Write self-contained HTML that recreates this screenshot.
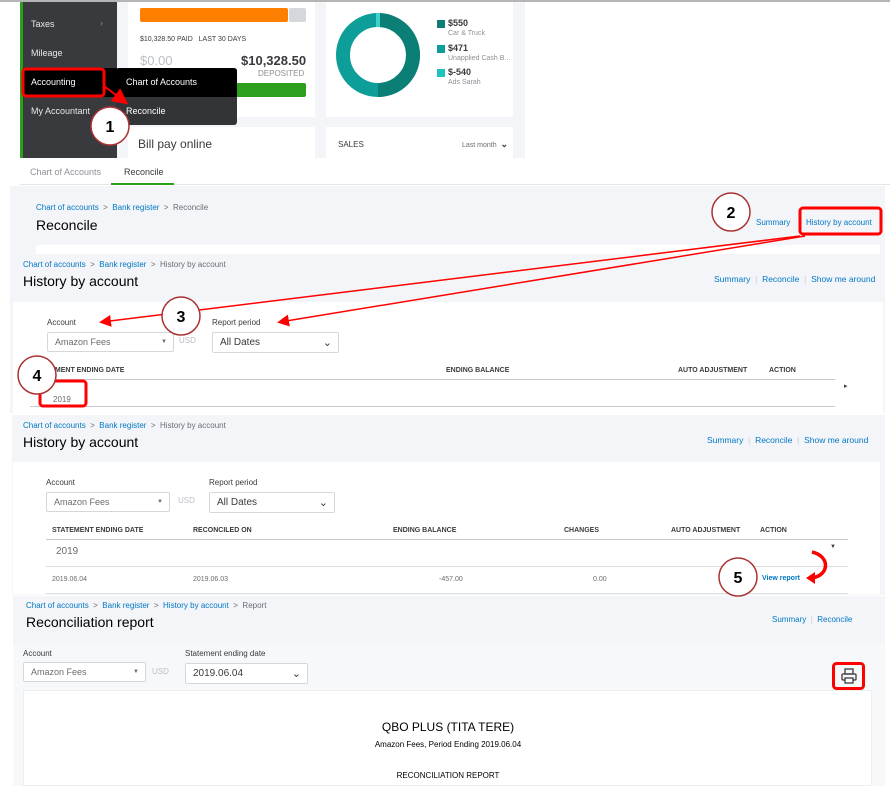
<!DOCTYPE html>
<html><head><meta charset="utf-8"><style>
*{margin:0;padding:0;box-sizing:border-box}
body{width:890px;height:796px;background:#fff;position:relative;overflow:hidden;font-family:"Liberation Sans",sans-serif;color:#393a3d}
.a{position:absolute;white-space:nowrap}
.bl{color:#0077c5}
.g{color:#6b6c72}
.sel{position:absolute;border:1px solid #d4d7dc;background:#fff;border-radius:2px;font-size:9px;color:#6b6c72;padding-left:7px;display:flex;align-items:center}
.hd{font-size:7px;font-weight:bold;color:#393a3d;position:absolute}
</style></head><body>
<div class="a" style="left:0;top:0;width:890px;height:2px;background:#b5b5b5"></div>
<div class="a" style="left:117px;top:2px;width:408px;height:156px;background:#f4f5f8"></div>
<div class="a" style="left:20px;top:2px;width:97px;height:156px;background:#393a3d;border-left:3px solid #2ca01c"></div>
<div class="a" style="left:31px;top:19px;font-size:9px;color:#e8e8e8">Taxes</div>
<div class="a" style="left:100px;top:18px;font-size:9px;color:#888">›</div>
<div class="a" style="left:31px;top:48px;font-size:9px;color:#e8e8e8">Mileage</div>
<div class="a" style="left:23px;top:68px;width:94px;height:29px;background:#000"></div>
<div class="a" style="left:31px;top:77px;font-size:9px;color:#fff">Accounting</div>
<div class="a" style="left:31px;top:106px;font-size:9px;color:#e8e8e8">My Accountant</div>
<div class="a" style="left:128px;top:2px;width:187px;height:115px;background:#fff"></div>
<div class="a" style="left:140px;top:8px;width:148px;height:14px;background:#ff8000;border-radius:2px"></div>
<div class="a" style="left:289px;top:8px;width:17px;height:14px;background:#d4d7dc;border-radius:2px"></div>
<div class="a" style="left:140px;top:36px;font-size:7px">$10,328.50 PAID &nbsp;&nbsp;LAST 30 DAYS</div>
<div class="a" style="left:140px;top:53px;font-size:13px;color:#babec5">$0.00</div>
<div class="a" style="left:241px;top:53px;font-size:13px;color:#393a3d;font-weight:bold">$10,328.50</div>
<div class="a" style="left:258px;top:69px;font-size:8px;color:#8d9096">DEPOSITED</div>
<div class="a" style="left:140px;top:83px;width:166px;height:14px;background:#2ca01c;border-radius:2px"></div>
<div class="a" style="left:326px;top:2px;width:187px;height:115px;background:#fff"></div>
<svg class="a" style="left:336px;top:13px" width="84" height="84"><circle cx="42" cy="42" r="35" fill="none" stroke="#0e9e9a" stroke-width="14"/><path d="M42 7 A35 35 0 0 1 42 77" fill="none" stroke="#0b7e76" stroke-width="14"/><path d="M40 7 L44 7" stroke="#3fd1cc" stroke-width="14"/></svg>
<div class="a" style="left:437px;top:20px;width:8px;height:8px;background:#0b7e76"></div>
<div class="a" style="left:448px;top:18px;font-size:9px;font-weight:bold">$550</div>
<div class="a" style="left:448px;top:30px;font-size:7px;color:#8d9096">Car &amp; Truck</div>
<div class="a" style="left:437px;top:45px;width:8px;height:8px;background:#0e9e9a"></div>
<div class="a" style="left:448px;top:43px;font-size:9px;font-weight:bold">$471</div>
<div class="a" style="left:448px;top:55px;font-size:7px;color:#8d9096">Unapplied Cash B...</div>
<div class="a" style="left:437px;top:69px;width:8px;height:8px;background:#1fc4bf"></div>
<div class="a" style="left:448px;top:67px;font-size:9px;font-weight:bold">$-540</div>
<div class="a" style="left:448px;top:79px;font-size:7px;color:#8d9096">Ads Sarah</div>
<div class="a" style="left:128px;top:127px;width:187px;height:31px;background:#fff"></div>
<div class="a" style="left:138px;top:137px;font-size:12px">Bill pay online</div>
<div class="a" style="left:326px;top:127px;width:187px;height:31px;background:#fff"></div>
<div class="a" style="left:338px;top:140px;font-size:8px">SALES</div>
<div class="a" style="left:462px;top:139px;font-size:7px;color:#6b6c72">Last month &nbsp;<b style="font-size:9px;color:#393a3d">⌄</b></div>
<div class="a" style="left:116px;top:68px;width:121px;height:57px;background:#333438;border-radius:3px;overflow:hidden"><div style="height:29px;background:#000"></div></div>
<div class="a" style="left:126px;top:77px;font-size:9px;color:#fff">Chart of Accounts</div>
<div class="a" style="left:126px;top:106px;font-size:9px;color:#fff">Reconcile</div>
<div class="a" style="left:20px;top:158px;width:870px;height:27px;background:#fff;border-bottom:1px solid #e3e5e8"></div>
<div class="a g" style="left:30px;top:167px;font-size:9px;color:#8d9096">Chart of Accounts</div>
<div class="a" style="left:124px;top:167px;font-size:9px">Reconcile</div>
<div class="a" style="left:111px;top:183px;width:63px;height:2px;background:#2ca01c"></div>
<div class="a" style="left:10px;top:186px;width:875px;height:68px;background:#f4f5f8"></div>
<div class="a" style="left:36px;top:203px;font-size:8px"><span class="bl">Chart of accounts</span> <span class="g">&nbsp;&gt;&nbsp;</span> <span class="bl">Bank register</span> <span class="g">&nbsp;&gt;&nbsp; Reconcile</span></div>
<div class="a" style="left:36px;top:217px;font-size:14px;color:#000">Reconcile</div>
<div class="a bl" style="left:756px;top:218px;font-size:8px">Summary</div>
<div class="a bl" style="left:806px;top:218px;font-size:8px">History by account</div>
<div class="a" style="left:36px;top:245px;width:844px;height:9px;background:#fff"></div>
<div class="a" style="left:10px;top:254px;width:875px;height:159px;background:#f4f5f8"></div>
<div class="a" style="left:23px;top:260px;font-size:8px"><span class="bl">Chart of accounts</span> <span class="g">&nbsp;&gt;&nbsp;</span> <span class="bl">Bank register</span> <span class="g">&nbsp;&gt;&nbsp; History by account</span></div>
<div class="a" style="left:23px;top:273px;font-size:14px;color:#000">History by account</div>
<div class="a" style="left:714px;top:274px;font-size:8.5px"><span class="bl">Summary</span> <span style="color:#ccc">&nbsp;|&nbsp;</span> <span class="bl">Reconcile</span> <span style="color:#ccc">&nbsp;|&nbsp;</span> <span class="bl">Show me around</span></div>
<div class="a" style="left:13px;top:302px;width:870px;height:111px;background:#fff"></div>
<div class="a" style="left:47px;top:318px;font-size:8px">Account</div>
<div class="sel" style="left:47px;top:332px;width:127px;height:20px">Amazon Fees<span style="position:absolute;right:6px;font-size:6px">▼</span></div>
<div class="a" style="left:179px;top:336px;font-size:8px;color:#babec5">USD</div>
<div class="a" style="left:212px;top:318px;font-size:8px">Report period</div>
<div class="sel" style="left:212px;top:332px;width:127px;height:21px;font-size:10px;color:#393a3d">All Dates<span style="position:absolute;right:6px;font-size:11px">⌄</span></div>
<div class="hd" style="left:33px;top:367px">STATEMENT ENDING DATE</div>
<div class="hd" style="left:446px;top:367px">ENDING BALANCE</div>
<div class="hd" style="left:678px;top:367px">AUTO ADJUSTMENT</div>
<div class="hd" style="left:769px;top:367px">ACTION</div>
<div class="a" style="left:30px;top:379px;width:805px;height:1px;background:#c8cacf"></div>
<div class="a g" style="left:53px;top:395px;font-size:8px">2019</div>
<div class="a" style="left:844px;top:382px;font-size:7px">▸</div>
<div class="a" style="left:30px;top:406px;width:805px;height:1px;background:#c8cacf"></div>
<div class="a" style="left:12px;top:415px;width:873px;height:180px;background:#f4f5f8"></div>
<div class="a" style="left:23px;top:421px;font-size:8px"><span class="bl">Chart of accounts</span> <span class="g">&nbsp;&gt;&nbsp;</span> <span class="bl">Bank register</span> <span class="g">&nbsp;&gt;&nbsp; History by account</span></div>
<div class="a" style="left:23px;top:434px;font-size:14px;color:#000">History by account</div>
<div class="a" style="left:707px;top:435px;font-size:8.5px"><span class="bl">Summary</span> <span style="color:#ccc">&nbsp;|&nbsp;</span> <span class="bl">Reconcile</span> <span style="color:#ccc">&nbsp;|&nbsp;</span> <span class="bl">Show me around</span></div>
<div class="a" style="left:13px;top:462px;width:867px;height:132px;background:#fff"></div>
<div class="a" style="left:46px;top:478px;font-size:8px">Account</div>
<div class="sel" style="left:46px;top:492px;width:124px;height:20px">Amazon Fees<span style="position:absolute;right:6px;font-size:6px">▼</span></div>
<div class="a" style="left:178px;top:496px;font-size:8px;color:#babec5">USD</div>
<div class="a" style="left:209px;top:478px;font-size:8px">Report period</div>
<div class="sel" style="left:209px;top:492px;width:126px;height:21px;font-size:10px;color:#393a3d">All Dates<span style="position:absolute;right:6px;font-size:11px">⌄</span></div>
<div class="hd" style="left:52px;top:527px">STATEMENT ENDING DATE</div>
<div class="hd" style="left:193px;top:527px">RECONCILED ON</div>
<div class="hd" style="left:393px;top:527px">ENDING BALANCE</div>
<div class="hd" style="left:564px;top:527px">CHANGES</div>
<div class="hd" style="left:671px;top:527px">AUTO ADJUSTMENT</div>
<div class="hd" style="left:760px;top:527px">ACTION</div>
<div class="a" style="left:46px;top:539px;width:802px;height:1px;background:#c8cacf"></div>
<div class="a g" style="left:56px;top:546px;font-size:10px">2019</div>
<div class="a" style="left:830px;top:544px;font-size:6px">▼</div>
<div class="a" style="left:46px;top:566px;width:802px;height:1px;background:#dcdee2"></div>
<div class="a g" style="left:52px;top:576px;font-size:7px">2019.06.04</div>
<div class="a g" style="left:193px;top:576px;font-size:7px">2019.06.03</div>
<div class="a g" style="left:439px;top:576px;font-size:7px">-457.00</div>
<div class="a g" style="left:593px;top:576px;font-size:7px">0.00</div>
<div class="a bl" style="left:762px;top:575px;font-size:7px;font-weight:bold">View report</div>
<div class="a" style="left:46px;top:593px;width:802px;height:1px;background:#dcdee2"></div>
<div class="a" style="left:13px;top:596px;width:872px;height:190px;background:#f4f5f8"></div>
<div class="a" style="left:26px;top:601px;font-size:8px"><span class="bl">Chart of accounts</span> <span class="g">&nbsp;&gt;&nbsp;</span> <span class="bl">Bank register</span> <span class="g">&nbsp;&gt;&nbsp;</span> <span class="bl">History by account</span> <span class="g">&nbsp;&gt;&nbsp; Report</span></div>
<div class="a" style="left:26px;top:614px;font-size:14px;color:#000">Reconciliation report</div>
<div class="a" style="left:772px;top:615px;font-size:8px"><span class="bl">Summary</span> <span style="color:#ccc">&nbsp;|&nbsp;</span> <span class="bl">Reconcile</span></div>
<div class="a" style="left:13px;top:643px;width:872px;height:143px;background:#f7f8fa"></div>
<div class="a" style="left:23px;top:649px;font-size:8px">Account</div>
<div class="sel" style="left:23px;top:662px;width:123px;height:20px">Amazon Fees<span style="position:absolute;right:6px;font-size:6px">▼</span></div>
<div class="a" style="left:152px;top:667px;font-size:8px;color:#babec5">USD</div>
<div class="a" style="left:185px;top:649px;font-size:8px">Statement ending date</div>
<div class="sel" style="left:185px;top:663px;width:123px;height:21px;font-size:10px;color:#393a3d">2019.06.04<span style="position:absolute;right:6px;font-size:11px">⌄</span></div>
<svg class="a" style="left:832px;top:662px" width="33" height="28"><rect x="1.5" y="1.5" width="30" height="25" rx="3" fill="none" stroke="#f00" stroke-width="3"/><rect x="13" y="7" width="8" height="5" fill="none" stroke="#393a3d" stroke-width="1.3"/><rect x="10" y="12" width="14" height="6" rx="1" fill="none" stroke="#393a3d" stroke-width="1.3"/><rect x="13" y="16" width="8" height="5" fill="#fff" stroke="#393a3d" stroke-width="1.3"/></svg>
<div class="a" style="left:23px;top:690px;width:849px;height:96px;background:#fff;border:1px solid #eceef1"></div>
<div class="a" style="left:0;top:720px;width:896px;text-align:center;font-size:12px;color:#000">QBO PLUS (TITA TERE)</div>
<div class="a" style="left:0;top:740px;width:896px;text-align:center;font-size:8px;color:#000">Amazon Fees, Period Ending 2019.06.04</div>
<div class="a" style="left:0;top:771px;width:896px;text-align:center;font-size:8px;color:#000">RECONCILIATION REPORT</div>
<svg class="a" style="left:0;top:0" width="890" height="796">
<defs><marker id="ar" markerWidth="8" markerHeight="8" refX="6" refY="4" orient="auto"><path d="M0 0 L8 4 L0 8 z" fill="#f00"/></marker></defs>
<rect x="23" y="69" width="81" height="27" rx="3" fill="none" stroke="#f00" stroke-width="3"/>
<path d="M104 86 L125 102" stroke="#f00" stroke-width="2" marker-end="url(#ar)"/>
<rect x="800" y="208" width="81" height="26" rx="3" fill="none" stroke="#f00" stroke-width="3"/>
<path d="M800 236 L102 322" stroke="#f00" stroke-width="1.5" marker-end="url(#ar)"/>
<path d="M805 236 L280 322" stroke="#f00" stroke-width="1.5" marker-end="url(#ar)"/>
<rect x="40" y="381" width="46" height="25" rx="3" fill="none" stroke="#f00" stroke-width="3"/>
<path d="M812 552 C830 556 830 575 812 578" fill="none" stroke="#f00" stroke-width="3.5"/>
<path d="M806 578 L815 572 L815 584 z" fill="#f00"/>
<g font-family="Liberation Sans" font-weight="bold" font-size="16" text-anchor="middle">
<circle cx="110" cy="126" r="19" fill="#fff" stroke="#a33" stroke-width="1.5"/><text x="110" y="132">1</text>
<circle cx="731" cy="212" r="19" fill="#fff" stroke="#a33" stroke-width="1.5"/><text x="731" y="218">2</text>
<circle cx="181" cy="316" r="19" fill="#fff" stroke="#a33" stroke-width="1.5"/><text x="181" y="322">3</text>
<circle cx="37" cy="375" r="19" fill="#fff" stroke="#a33" stroke-width="1.5"/><text x="37" y="381">4</text>
<circle cx="738" cy="577" r="19" fill="#fff" stroke="#a33" stroke-width="1.5"/><text x="738" y="583">5</text>
</g>
</svg>
</body></html>
